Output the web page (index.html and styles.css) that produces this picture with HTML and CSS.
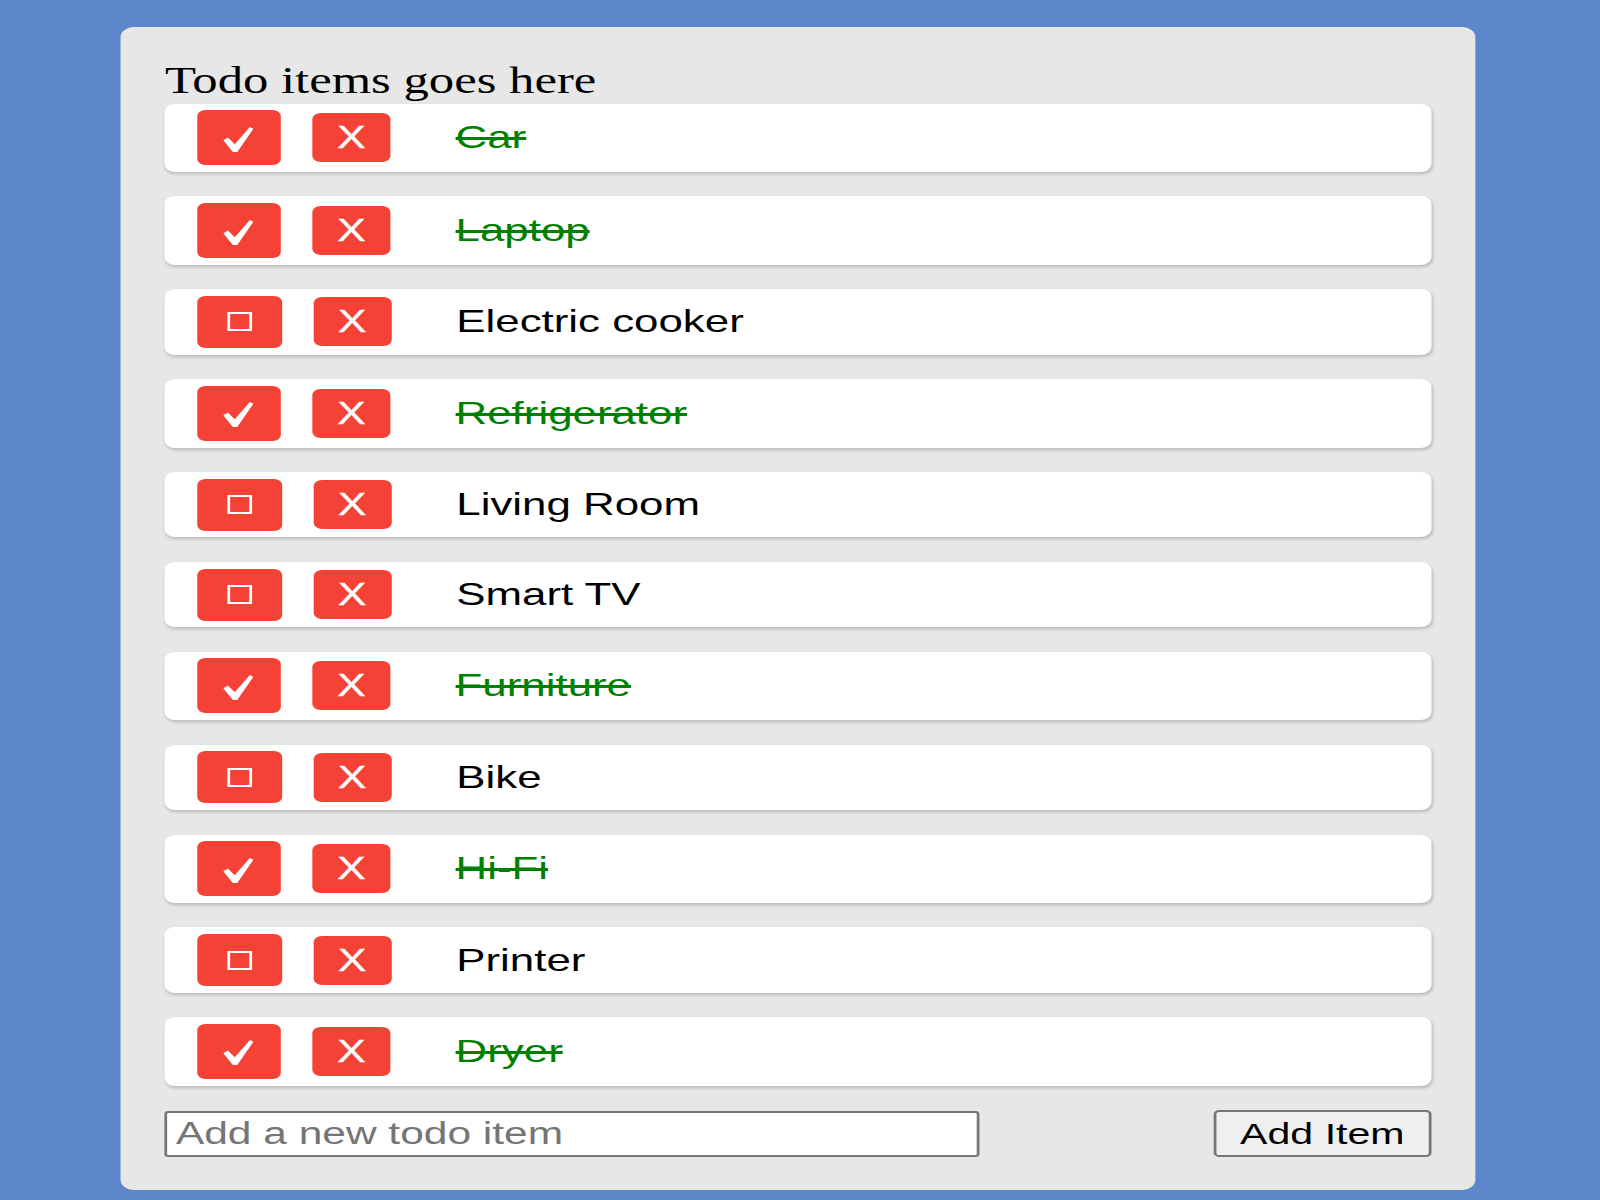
FILE: index.html
```html
<!DOCTYPE html>
<html lang="en">
<head>
<meta charset="utf-8">
<title>Todo</title>
<link rel="stylesheet" href="styles.css">
</head>
<body>
<div class="stage">
  <main class="todo">
    <h1 class="todo-title">Todo items goes here</h1>
    <ul class="todo-list">
      <li class="todo-item is-done">
        <button class="btn btn-toggle" type="button"><svg class="icon-check" viewBox="0 0 22 25"><path d="M0 13.2 L3.4 10.4 L8.4 17.2 L19.4 0 L22 1.8 L10.2 25 L7 25 Z"/></svg></button>
        <button class="btn btn-delete" type="button">X</button>
        <span class="todo-text">Car</span>
      </li>
      <li class="todo-item is-done">
        <button class="btn btn-toggle" type="button"><svg class="icon-check" viewBox="0 0 22 25"><path d="M0 13.2 L3.4 10.4 L8.4 17.2 L19.4 0 L22 1.8 L10.2 25 L7 25 Z"/></svg></button>
        <button class="btn btn-delete" type="button">X</button>
        <span class="todo-text">Laptop</span>
      </li>
      <li class="todo-item">
        <button class="btn btn-toggle is-empty" type="button"><span class="icon-box"></span></button>
        <button class="btn btn-delete" type="button">X</button>
        <span class="todo-text">Electric cooker</span>
      </li>
      <li class="todo-item is-done">
        <button class="btn btn-toggle" type="button"><svg class="icon-check" viewBox="0 0 22 25"><path d="M0 13.2 L3.4 10.4 L8.4 17.2 L19.4 0 L22 1.8 L10.2 25 L7 25 Z"/></svg></button>
        <button class="btn btn-delete" type="button">X</button>
        <span class="todo-text">Refrigerator</span>
      </li>
      <li class="todo-item">
        <button class="btn btn-toggle is-empty" type="button"><span class="icon-box"></span></button>
        <button class="btn btn-delete" type="button">X</button>
        <span class="todo-text">Living Room</span>
      </li>
      <li class="todo-item">
        <button class="btn btn-toggle is-empty" type="button"><span class="icon-box"></span></button>
        <button class="btn btn-delete" type="button">X</button>
        <span class="todo-text">Smart TV</span>
      </li>
      <li class="todo-item is-done">
        <button class="btn btn-toggle" type="button"><svg class="icon-check" viewBox="0 0 22 25"><path d="M0 13.2 L3.4 10.4 L8.4 17.2 L19.4 0 L22 1.8 L10.2 25 L7 25 Z"/></svg></button>
        <button class="btn btn-delete" type="button">X</button>
        <span class="todo-text">Furniture</span>
      </li>
      <li class="todo-item">
        <button class="btn btn-toggle is-empty" type="button"><span class="icon-box"></span></button>
        <button class="btn btn-delete" type="button">X</button>
        <span class="todo-text">Bike</span>
      </li>
      <li class="todo-item is-done">
        <button class="btn btn-toggle" type="button"><svg class="icon-check" viewBox="0 0 22 25"><path d="M0 13.2 L3.4 10.4 L8.4 17.2 L19.4 0 L22 1.8 L10.2 25 L7 25 Z"/></svg></button>
        <button class="btn btn-delete" type="button">X</button>
        <span class="todo-text">Hi-Fi</span>
      </li>
      <li class="todo-item">
        <button class="btn btn-toggle is-empty" type="button"><span class="icon-box"></span></button>
        <button class="btn btn-delete" type="button">X</button>
        <span class="todo-text">Printer</span>
      </li>
      <li class="todo-item is-done">
        <button class="btn btn-toggle" type="button"><svg class="icon-check" viewBox="0 0 22 25"><path d="M0 13.2 L3.4 10.4 L8.4 17.2 L19.4 0 L22 1.8 L10.2 25 L7 25 Z"/></svg></button>
        <button class="btn btn-delete" type="button">X</button>
        <span class="todo-text">Dryer</span>
      </li>
    </ul>
    <form class="add-row">
      <input class="add-input" type="text" placeholder="Add a new todo item">
      <button class="add-btn" type="button">Add Item</button>
    </form>
  </main>
</div>
</body>
</html>
```
FILE: styles.css
```css
html, body {
  margin: 0;
  padding: 0;
}

body {
  background: #5c88cb;
  overflow: hidden;
  font-family: "Liberation Sans", Arial, sans-serif;
}

/* the page is laid out at 1168px and stretched horizontally to fill 1600px */
.stage {
  width: 1168px;
  padding-top: 27px;
  transform: scaleX(1.369863);
  transform-origin: 0 0;
}

.todo {
  width: 989px;
  box-sizing: border-box;
  margin-left: 87.6px;
  padding: 34px 32px 33px 32.8px;
  background: #e7e7e7;
  border-radius: 10px;
}

.todo-title {
  margin: 0 0 2.5px;
  font-family: "Liberation Serif", "Times New Roman", serif;
  font-weight: 400;
  font-size: 37px;
  line-height: 40px;
  color: #000;
}

.todo-list {
  list-style: none;
  margin: 0;
  padding: 0;
  display: flex;
  flex-direction: column;
  gap: 24.5px;
}

.todo-item {
  display: flex;
  align-items: center;
  padding: 6.7px 23.2px;
  background: #fff;
  border-radius: 8px;
  box-shadow: 1px 2px 3px rgba(0, 0, 0, 0.2);
}

.btn {
  display: flex;
  align-items: center;
  justify-content: center;
  flex: none;
  border: 0;
  padding: 0;
  background: #f44336;
  color: #fff;
  border-radius: 6px;
  font-family: "Liberation Sans", Arial, sans-serif;
}

.btn-toggle {
  width: 61.5px;
  height: 55px;
}

.btn-toggle.is-empty {
  width: 62px;
  height: 52px;
}

.btn-delete {
  width: 57px;
  height: 49px;
  margin-left: 23px;
  font-size: 31px;
  line-height: 1;
  -webkit-text-stroke: 0.4px #fff;
}

.icon-check {
  width: 22px;
  height: 25px;
  fill: #fff;
  margin-top: 3px;
}

.icon-box {
  display: block;
  width: 18px;
  height: 19px;
  box-sizing: border-box;
  border: 2px solid #fff;
}

.todo-text {
  margin-left: 47.5px;
  font-size: 32px;
  color: #000;
  white-space: nowrap;
}

.is-done .todo-text {
  color: #008000;
  text-decoration: line-through;
  text-decoration-thickness: 3px;
}

.add-row {
  display: flex;
  justify-content: space-between;
  align-items: center;
  margin: 24.8px 0 0;
}

.add-input {
  width: 594.4px;
  height: 46px;
  box-sizing: border-box;
  margin: 0;
  padding: 0 6px;
  border: 2px solid #767676;
  border-radius: 3px;
  background: #fff;
  color: #000;
  font-family: "Liberation Sans", Arial, sans-serif;
  font-size: 31px;
}

.add-input::placeholder {
  color: #757575;
}

.add-btn {
  width: 158.6px;
  height: 46.7px;
  box-sizing: border-box;
  margin: 0;
  padding: 0;
  border: 2px solid #767676;
  border-radius: 4px;
  background: #efefef;
  color: #000;
  font-family: "Liberation Sans", Arial, sans-serif;
  font-size: 30px;
}
```
